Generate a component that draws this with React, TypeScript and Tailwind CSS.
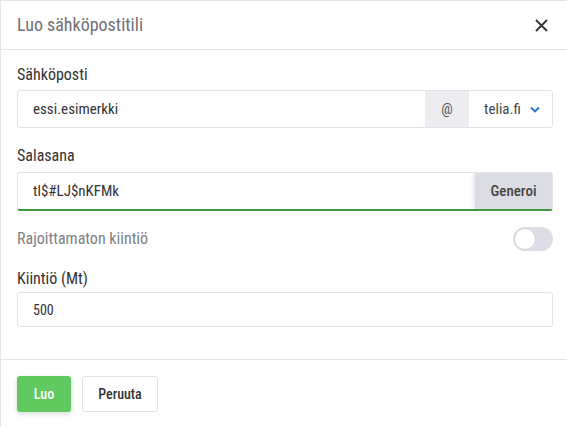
import React from 'react';

export default function App() {
  return (
    <div className="h-[427px] w-[567px] overflow-hidden bg-white font-['Roboto',sans-serif] [font-stretch:75%]">
      <div className="flex h-full flex-col border-l border-t border-[#e4e4ea]">
        <div className="flex h-[49px] items-center justify-between border-b border-[#e4e4ea] pl-[16px] pr-[19px]">
          <h2 className="text-[18px] leading-[22px] text-[#707076]">Luo sähköpostitili</h2>
          <button className="text-[#333]">
            <svg width="13" height="13" viewBox="0 0 13 13" fill="none" stroke="currentColor" strokeWidth="1.8">
              <path d="M1 1l11 11M12 1L1 12" />
            </svg>
          </button>
        </div>

        <div className="flex flex-col pl-[16px] pr-[14px] pt-[15px]">
          <label className="text-[16px] leading-[20px] text-[#333]">Sähköposti</label>
          <div className="mt-[5px] flex h-[38px] overflow-hidden rounded-[3px] border border-[#e2e2e9]">
            <input
              className="min-w-0 flex-1 px-[15px] text-[15px] text-[#333] outline-none"
              defaultValue="essi.esimerkki"
            />
            <div className="flex w-[44px] items-center justify-center bg-[#ececf1] text-[15px] text-[#555]">@</div>
            <div className="flex w-[83px] items-center gap-[9px] pl-[15px] text-[15px] text-[#444]">
              telia.fi
              <svg width="10" height="7" viewBox="0 0 10 7" fill="none" stroke="#2478c6" strokeWidth="1.8">
                <path d="M1 1.5l4 4 4-4" />
              </svg>
            </div>
          </div>

          <label className="mt-[18px] text-[16px] leading-[20px] text-[#333]">Salasana</label>
          <div className="mt-[6px] flex h-[39px] overflow-hidden rounded-[3px] border border-b-2 border-[#e2e2e9] border-b-[#3f9a3f]">
            <input
              className="min-w-0 flex-1 px-[15px] text-[15px] text-[#333] outline-none"
              defaultValue="tl$#LJ$nKFMk"
            />
            <button className="w-[77px] bg-[#dcdde4] text-[15px] font-medium text-[#444] shadow-[-2px_0_4px_rgba(0,0,0,0.1)]">
              Generoi
            </button>
          </div>

          <div className="mt-[16px] flex h-[24px] items-center justify-between">
            <span className="text-[16px] text-[#808086]">Rajoittamaton kiintiö</span>
            <div className="flex h-[24px] w-[40px] items-center rounded-full bg-[#dcdde6] px-[1px]">
              <div className="h-[22px] w-[22px] rounded-full border border-[#d3d4dd] bg-white" />
            </div>
          </div>

          <label className="mt-[18px] text-[16px] leading-[20px] text-[#333]">Kiintiö (Mt)</label>
          <input
            className="mt-[3px] h-[35px] rounded-[3px] border border-[#e2e2e9] px-[15px] text-[14px] text-[#333] outline-none"
            defaultValue="500"
          />
        </div>

        <div className="mt-[32px] flex gap-[11px] border-t border-[#e4e4ea] px-[16px] pt-[16px]">
          <button className="h-[36px] w-[54px] rounded-[3px] bg-[#60ca60] text-[14px] font-medium text-white shadow-[0_2px_5px_rgba(0,0,0,0.15)]">
            Luo
          </button>
          <button className="h-[36px] w-[76px] rounded-[3px] border border-[#e4e4ea] bg-white text-[14px] font-medium text-[#333]">
            Peruuta
          </button>
        </div>
      </div>
    </div>
  );
}
